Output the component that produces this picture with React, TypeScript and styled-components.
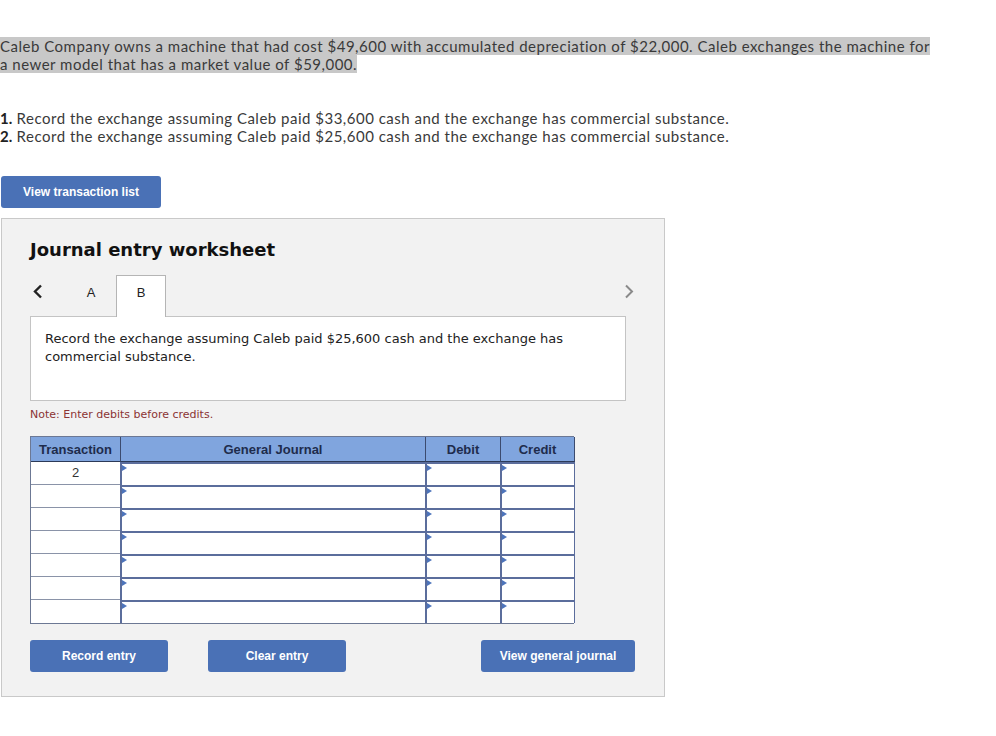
import React from "react";
import styled, { createGlobalStyle } from "styled-components";

const Global = createGlobalStyle`
  html, body { margin: 0; padding: 0; background: #fff; }
  body { font-family: Lato, "Open Sans", sans-serif; }
`;

const Page = styled.div`
  padding-top: 37px;
  width: 996px;
`;

const Intro = styled.p`
  margin: 0;
  font-family: Lato, sans-serif;
  font-size: 15px;
  line-height: 18px;
  letter-spacing: 0.5px;
  color: #3a3a3a;
  & > span { background: #c8c8c8; }
`;

const Steps = styled.ol`
  list-style: none;
  margin: 36px 0 0;
  padding: 0;
  font-family: Lato, sans-serif;
  font-size: 15px;
  line-height: 18px;
  letter-spacing: 0.5px;
  color: #3a3a3a;
`;

const StepNum = styled.b`
  font-weight: 700;
  color: #222;
  letter-spacing: 0;
`;

const Btn = styled.button<{ $w: number }>`
  width: ${(p) => p.$w}px;
  height: 32px;
  border: none;
  border-radius: 3px;
  background: #4a71b6;
  color: #fff;
  font-family: "Liberation Sans", Arial, sans-serif;
  font-weight: 700;
  font-size: 12px;
  padding: 0;
  cursor: pointer;
`;

const TopBtnWrap = styled.div`
  margin: 31px 0 0 1px;
`;

const Panel = styled.section`
  margin: 10px 0 0 1px;
  width: 664px;
  box-sizing: border-box;
  border: 1px solid #c9c9c9;
  background: #f2f2f2;
  padding: 19px 30px 24px 28px;
`;

const Title = styled.h2`
  margin: 0;
  font-family: "DejaVu Sans", Verdana, sans-serif;
  font-weight: 700;
  font-size: 18px;
  line-height: 24px;
  color: #111;
`;

const TabRow = styled.div`
  margin-top: 13px;
  display: flex;
  align-items: stretch;
  height: 41px;
  position: relative;
  z-index: 1;
`;

const Chevron = styled.div<{ $grey?: boolean }>`
  width: 36px;
  display: flex;
  align-items: center;
  justify-content: ${(p) => (p.$grey ? "flex-end" : "flex-start")};
  padding-left: ${(p) => (p.$grey ? "0" : "3px")};
  margin-left: ${(p) => (p.$grey ? "auto" : "0")};
  box-sizing: border-box;
  padding-bottom: 8px;
`;

const Tab = styled.div<{ $active?: boolean }>`
  width: 50px;
  box-sizing: border-box;
  display: flex;
  align-items: center;
  justify-content: center;
  padding-bottom: 8px;
  font-family: "Liberation Sans", Arial, sans-serif;
  font-size: 13px;
  color: #222;
  background: ${(p) => (p.$active ? "#fff" : "transparent")};
  border: 1px solid ${(p) => (p.$active ? "#b5b5b5" : "transparent")};
  border-bottom: none;
  margin-bottom: -1px;
`;

const Desc = styled.div`
  width: 596px;
  height: 85px;
  box-sizing: border-box;
  background: #fff;
  border: 1px solid #c4c4c4;
  padding: 13px 14px;
  font-family: "DejaVu Sans", Verdana, sans-serif;
  font-size: 13px;
  line-height: 18px;
  color: #222;
`;

const Note = styled.div`
  margin-top: 7px;
  font-family: "DejaVu Sans", Verdana, sans-serif;
  font-size: 11px;
  line-height: 14px;
  color: #8b3434;
`;

const Grid = styled.div`
  margin-top: 14px;
  width: 544px;
  display: grid;
  grid-template-columns: 90px 305px 75px 74px;
  grid-auto-rows: 23px;
  grid-template-rows: 25px;
  border: 1px solid #6c7894;
  box-sizing: border-box;
  background: #fff;
`;

const Head = styled.div`
  background: #80a5de;
  border-right: 1px solid #3c4b6e;
  border-bottom: 1px solid #2c3a58;
  display: flex;
  align-items: center;
  justify-content: center;
  font-family: "Liberation Sans", Arial, sans-serif;
  font-weight: 700;
  font-size: 13px;
  color: #1e2c4c;
  &:last-child { border-right: none; }
`;

const TxCell = styled.div`
  border-right: 1px solid #5d6b8c;
  border-bottom: 1px solid #8a93a8;
  display: flex;
  align-items: center;
  justify-content: center;
  padding-bottom: 2px;
  font-family: "Liberation Sans", Arial, sans-serif;
  font-size: 13px;
  color: #333;
  background: #fff;
  &:nth-last-child(4) { border-bottom: none; }
`;

const InCell = styled.div`
  position: relative;
  background: #fff;
  border-top: 2px solid #5b6d9c;
  border-left: 2px solid #5b6d9c;
  border-right: 1px solid #5b6d9c;
  margin-left: -1px;
  &::before {
    content: "";
    position: absolute;
    left: 0;
    top: 1px;
    border-top: 3px solid transparent;
    border-bottom: 3px solid transparent;
    border-left: 5px solid #4d74bb;
  }
`;

const BtnRow = styled.div`
  margin-top: 16px;
  width: 605px;
  display: flex;
  gap: 40px;
  & > :last-child { margin-left: auto; }
`;

const rows = ["2", "", "", "", "", "", ""];

export default function App() {
  return (
    <Page>
      <Global />
      <Intro>
        <span>
          Caleb Company owns a machine that had cost $49,600 with accumulated depreciation of $22,000. Caleb exchanges the machine for
          <br />a newer model that has a market value of $59,000.
        </span>
      </Intro>
      <Steps>
        <li>
          <StepNum>1.</StepNum> Record the exchange assuming Caleb paid $33,600 cash and the exchange has commercial substance.
        </li>
        <li>
          <StepNum>2.</StepNum> Record the exchange assuming Caleb paid $25,600 cash and the exchange has commercial substance.
        </li>
      </Steps>
      <TopBtnWrap>
        <Btn $w={160}>View transaction list</Btn>
      </TopBtnWrap>
      <Panel>
        <Title>Journal entry worksheet</Title>
        <TabRow>
          <Chevron>
            <svg width="10" height="15" viewBox="0 0 10 15">
              <polyline points="8,1.5 2,7.5 8,13.5" fill="none" stroke="#222" strokeWidth="2.4" />
            </svg>
          </Chevron>
          <Tab>A</Tab>
          <Tab $active>B</Tab>
          <Chevron $grey>
            <svg width="10" height="15" viewBox="0 0 10 15">
              <polyline points="2,1.5 8,7.5 2,13.5" fill="none" stroke="#8a8a8a" strokeWidth="2" />
            </svg>
          </Chevron>
        </TabRow>
        <Desc>
          Record the exchange assuming Caleb paid $25,600 cash and the exchange has
          <br />
          commercial substance.
        </Desc>
        <Note>Note: Enter debits before credits.</Note>
        <Grid>
          <Head>Transaction</Head>
          <Head>General Journal</Head>
          <Head>Debit</Head>
          <Head>Credit</Head>
          {rows.map((r, i) => (
            <React.Fragment key={i}>
              <TxCell>{r}</TxCell>
              <InCell />
              <InCell />
              <InCell />
            </React.Fragment>
          ))}
        </Grid>
        <BtnRow>
          <Btn $w={138}>Record entry</Btn>
          <Btn $w={138}>Clear entry</Btn>
          <Btn $w={154}>View general journal</Btn>
        </BtnRow>
      </Panel>
    </Page>
  );
}
